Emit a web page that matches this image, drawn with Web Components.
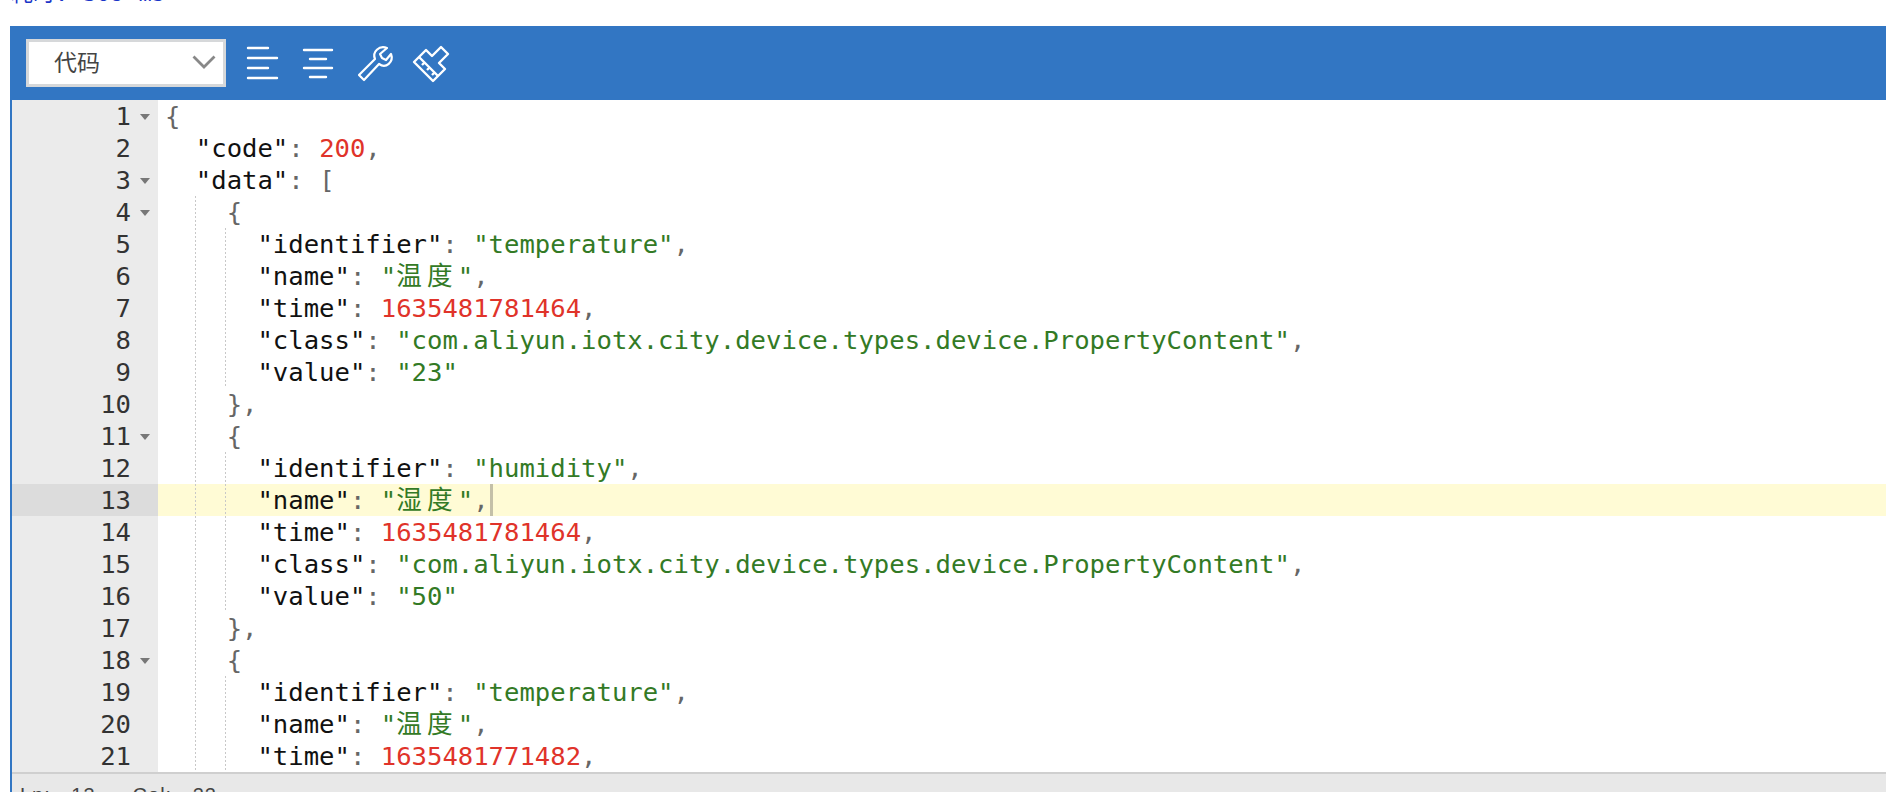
<!DOCTYPE html>
<html>
<head>
<meta charset="utf-8">
<style>
  html, body { margin: 0; padding: 0; height: 792px; overflow: hidden; background: #fff; }
</style>
</head>
<body>
<time-info>耗时: 308 ms</time-info>
<json-panel></json-panel>

<script>
class TimeInfo extends HTMLElement {
    constructor() {
        super()
        this.attachShadow({ mode: 'open' }).innerHTML = `
            <style>
                :host {
                    display: block;
                    height: 26px;
                    overflow: hidden;
                    padding-left: 11px;
                    box-sizing: border-box;
                    color: #1a35c8;
                    font: 22px/26px "DejaVu Sans Mono", "Noto Sans CJK SC", monospace;
                    word-spacing: 2px;
                }
                div { margin-top: -19px; }
            </style>
            <div><slot></slot></div>
        `
    }
}
customElements.define('time-info', TimeInfo)

class ModeSelect extends HTMLElement {
    constructor() {
        super()
        this.attachShadow({ mode: 'open' }).innerHTML = `
            <style>
                :host {
                    display: flex;
                    align-items: center;
                    justify-content: space-between;
                    width: 200px;
                    height: 48px;
                    box-sizing: border-box;
                    padding: 0 7px 0 25px;
                    background: #fff;
                    border: 3px solid #d6d8da;
                    color: #444;
                    font: 23px/40px "Noto Sans CJK SC", sans-serif;
                }
                span { display: block; margin-top: -4px; }
                svg { margin-top: -3px; }
            </style>
            <span><slot></slot></span>
            <svg width="24" height="14" viewBox="0 0 24 14" fill="none" stroke="#888" stroke-width="2.8">
                <path d="M1.5 1.5 12 12 22.5 1.5"/>
            </svg>
        `
    }
}
customElements.define('mode-select', ModeSelect)

const toolIcons = {
    left: `<svg width="36" height="36" viewBox="0 0 36 36" fill="none" stroke="#fff" stroke-width="2.4" stroke-linecap="round">
        <path d="M2 3H22M2 13H31M2 23H22M2 33H31"/></svg>`,
    center: `<svg width="36" height="36" viewBox="0 0 36 36" fill="none" stroke="#fff" stroke-width="2.4" stroke-linecap="round">
        <path d="M2 5H30M8 14H24M2 23H30M8 32H24"/></svg>`,
    wrench: `<svg width="36" height="36" viewBox="0 0 36 36" fill="none" stroke="#fff" stroke-width="2.2" stroke-linejoin="round">
        <path d="M1 30 17 14C14 7 21 0 29 3L22 9 24 13 28 15 33 9C36 17 28 24 21 19L6 35Z"/></svg>`,
    brush: `<svg width="36" height="36" viewBox="0 0 36 36" fill="none" stroke="#fff" stroke-width="2.4" stroke-linejoin="round">
        <path d="M0 17 12 5 18 11 27 2 34 9 25 18 31 24 19 36Z"/>
        <path d="M5 12 24 31M8 20l3-3M13 25l3-3M18 30l3-3"/></svg>`
}

class ToolIcon extends HTMLElement {
    constructor() {
        super()
        this.attachShadow({ mode: 'open' })
    }
    connectedCallback() {
        this.shadowRoot.innerHTML = `
            <style>
                :host { display: block; width: 36px; height: 36px; }
                svg { display: block; overflow: visible; }
            </style>
            ${toolIcons[this.getAttribute('name')]}
        `
    }
}
customElements.define('tool-icon', ToolIcon)

class EditorToolbar extends HTMLElement {
    constructor() {
        super()
        this.attachShadow({ mode: 'open' }).innerHTML = `
            <style>
                :host {
                    display: flex;
                    align-items: center;
                    gap: 20px;
                    height: 74px;
                    box-sizing: border-box;
                    padding-left: 16px;
                    background: #3276c3;
                }
            </style>
            <slot></slot>
        `
    }
}
customElements.define('editor-toolbar', EditorToolbar)

class CodeLine extends HTMLElement {
    constructor() {
        super()
        this.attachShadow({ mode: 'open' })
    }
    connectedCallback() {
        const active = this.hasAttribute('active')
        const fold = this.hasAttribute('fold')
        const guides = (this.getAttribute('guides') || '').split(' ').filter(Boolean)
        this.shadowRoot.innerHTML = `
            <style>
                :host {
                    display: grid;
                    grid-template-columns: 146px 1fr;
                    height: 32px;
                    line-height: 32px;
                }
                .num {
                    background: ${active ? '#dcdcdc' : '#ebebeb'};
                    color: #333;
                    text-align: right;
                    padding-right: 27px;
                    position: relative;
                }
                .fold {
                    position: absolute;
                    right: 8px;
                    top: 14px;
                    border: 5px solid transparent;
                    border-top: 6px solid #777;
                    border-bottom: 0;
                }
                .code {
                    padding-left: 7px;
                    white-space: pre;
                    position: relative;
                    background: ${active ? '#fffbd5' : 'transparent'};
                    color: #000;
                }
                .guide {
                    position: absolute;
                    top: 0;
                    bottom: 0;
                    width: 1px;
                    background: repeating-linear-gradient(#c8c8c8 0 2px, transparent 2px 4px);
                }
                .caret {
                    display: inline-block;
                    width: 3px;
                    height: 32px;
                    margin-left: 1px;
                    background: #c4c0a8;
                    vertical-align: top;
                }
            </style>
            <div class="num">${this.getAttribute('n')}${fold ? '<span class="fold"></span>' : ''}</div>
            <div class="code">${guides.map(x => `<span class="guide" style="left:${x}px"></span>`).join('')}<slot></slot>${active ? '<span class="caret"></span>' : ''}</div>
        `
    }
}
customElements.define('code-line', CodeLine)

const K = s => `<span style="color:#111">"${s}"</span><span style="color:#666">:</span> `
const S = s => `<span style="color:#337a25">"${s}"</span>`
// ace gives a CJK character two columns
const W = s => `<span style="color:#337a25">"<span style="letter-spacing:5.2px">${s}</span>"</span>`
const N = s => `<span style="color:#e0332a">${s}</span>`
const P = s => `<span style="color:#666">${s}</span>`

const CLS = 'com.aliyun.iotx.city.device.types.device.PropertyContent'
const source = [
    { t: P('{'), fold: 1 },
    { t: '  ' + K('code') + N('200') + P(',') },
    { t: '  ' + K('data') + P('['), fold: 1 },
    { t: '    ' + P('{'), fold: 1, g: '37' },
    { t: '      ' + K('identifier') + S('temperature') + P(','), g: '37 67' },
    { t: '      ' + K('name') + W('温度') + P(','), g: '37 67' },
    { t: '      ' + K('time') + N('1635481781464') + P(','), g: '37 67' },
    { t: '      ' + K('class') + S(CLS) + P(','), g: '37 67' },
    { t: '      ' + K('value') + S('23'), g: '37 67' },
    { t: '    ' + P('},'), g: '37' },
    { t: '    ' + P('{'), fold: 1, g: '37' },
    { t: '      ' + K('identifier') + S('humidity') + P(','), g: '37 67' },
    { t: '      ' + K('name') + W('湿度') + P(','), g: '37 67', active: 1 },
    { t: '      ' + K('time') + N('1635481781464') + P(','), g: '37 67' },
    { t: '      ' + K('class') + S(CLS) + P(','), g: '37 67' },
    { t: '      ' + K('value') + S('50'), g: '37 67' },
    { t: '    ' + P('},'), g: '37' },
    { t: '    ' + P('{'), fold: 1, g: '37' },
    { t: '      ' + K('identifier') + S('temperature') + P(','), g: '37 67' },
    { t: '      ' + K('name') + W('温度') + P(','), g: '37 67' },
    { t: '      ' + K('time') + N('1635481771482') + P(','), g: '37 67' }
]

class CodeView extends HTMLElement {
    constructor() {
        super()
        this.attachShadow({ mode: 'open' }).innerHTML = `
            <style>
                :host {
                    display: block;
                    height: 672px;
                    overflow: hidden;
                    font: 25.6px "DejaVu Sans Mono", "Noto Sans CJK SC", monospace;
                }
            </style>
            <slot></slot>
        `
    }
    connectedCallback() {
        this.innerHTML = source.map((l, i) =>
            `<code-line n="${i + 1}" guides="${l.g || ''}"${l.fold ? ' fold' : ''}${l.active ? ' active' : ''}>${l.t}</code-line>`
        ).join('')
    }
}
customElements.define('code-view', CodeView)

class StatusBar extends HTMLElement {
    constructor() {
        super()
        this.attachShadow({ mode: 'open' }).innerHTML = `
            <style>
                :host {
                    display: flex;
                    gap: 37px;
                    height: 20px;
                    overflow: hidden;
                    box-sizing: border-box;
                    border-top: 2px solid #cfcfcf;
                    background: #e8e8e8;
                    color: #444;
                    padding-left: 8px;
                    font: 20px/42px "Liberation Sans", sans-serif;
                    letter-spacing: 1px;
                    word-spacing: 14px;
                }
            </style>
            <slot></slot>
        `
    }
}
customElements.define('status-bar', StatusBar)

class JsonPanel extends HTMLElement {
    constructor() {
        super()
        this.attachShadow({ mode: 'open' }).innerHTML = `
            <style>
                :host { display: block; margin-left: 10px; }
                .body { border-left: 2px solid #3276c3; }
            </style>
            <editor-toolbar>
                <mode-select>代码</mode-select>
                <tool-icon name="left"></tool-icon>
                <tool-icon name="center"></tool-icon>
                <tool-icon name="wrench"></tool-icon>
                <tool-icon name="brush"></tool-icon>
            </editor-toolbar>
            <div class="body">
                <code-view></code-view>
                <status-bar><span>Ln: 13</span><span>Col: 22</span></status-bar>
            </div>
        `
    }
}
customElements.define('json-panel', JsonPanel)
</script>
</body>
</html>
